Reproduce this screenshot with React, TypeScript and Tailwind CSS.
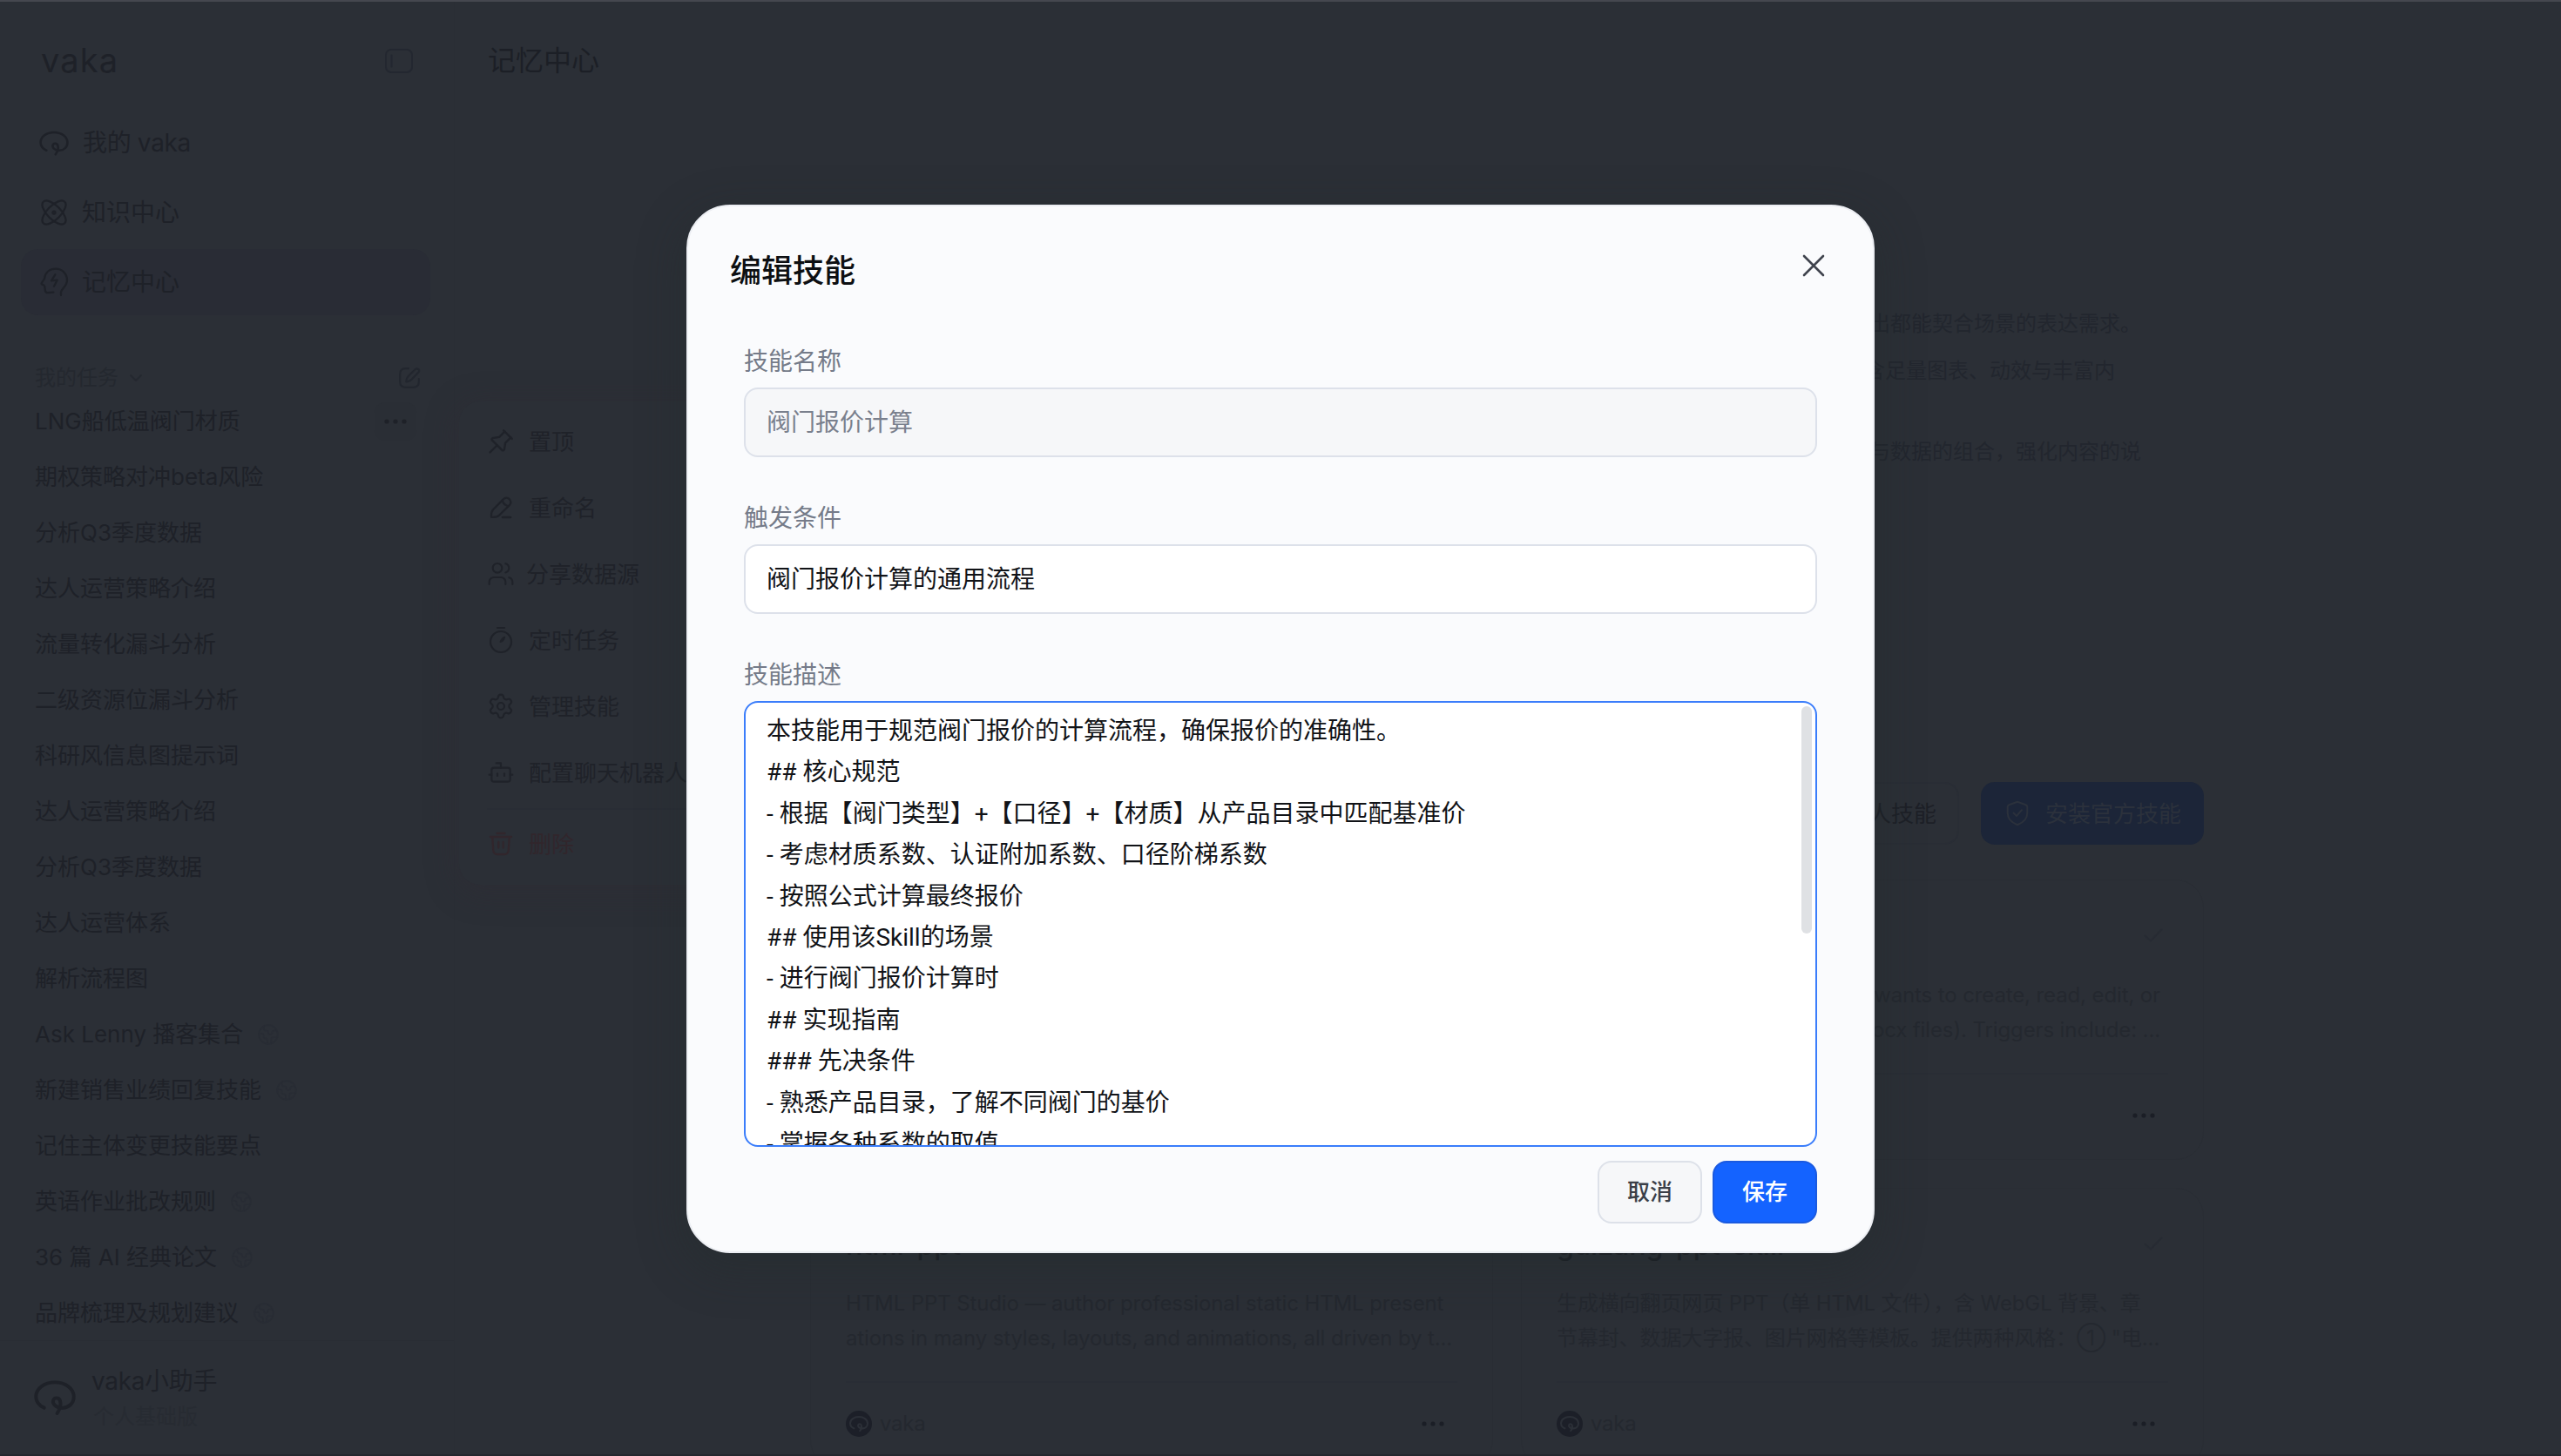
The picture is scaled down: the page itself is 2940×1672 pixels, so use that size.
import React from "react";
import { Atom, Bot, Earth, Settings, Users } from "lucide-react";

const stroke = {
  fill: "none",
  stroke: "currentColor",
  strokeLinecap: "round" as const,
  strokeLinejoin: "round" as const,
};

function Logo({ className, width = 2.6 }: { className: string; width?: number }) {
  return (
    <svg viewBox="0 0 34 29" className={className} {...stroke} strokeWidth={width}>
      <path d="M8.3 22.7C4.5 21 1.6 17.6 1.6 13.6C1.6 7 8.5 2 17 2C25.5 2 32.4 7 32.4 13.6C32.4 19 28.5 22.6 23.3 22.8C18 23 14.9 19.5 15.6 16.8C16.4 14.2 20.2 14 21.2 16.8C22.3 20 21 24.5 18.8 27.2" />
    </svg>
  );
}

function HeadIcon() {
  return (
    <svg viewBox="0 0 36 36" className="h-9 w-9" {...stroke} strokeWidth={2.3}>
      <path d="M25 33V29.5C25 26 32 23 32 15.7C32 8 26 2.7 19 2.7C12 2.7 7 7 6 14L2.8 19Q2 20.6 4.5 21Q6.3 21.5 6.3 24L7 28Q7.5 30.3 10 30.2L16.3 29.7" />
      <path d="M18.3 9.3L14 16.4L20.7 15.7L17 22.7" />
    </svg>
  );
}

function PanelIcon() {
  return (
    <svg viewBox="0 0 34 30" className="h-[30px] w-[34px]" {...stroke} strokeWidth={2}>
      <rect x="2" y="2" width="30" height="26" rx="6" />
      <path d="M8.5 8.5V21.5" />
    </svg>
  );
}

function ComposeIcon() {
  return (
    <svg viewBox="0 0 24 24" className="h-[26px] w-[26px]" {...stroke} strokeWidth={2}>
      <path d="M11 2H8Q2 2 2 8V16Q2 22 8 22H16Q22 22 22 16V13" />
      <path d="M8.5 16C8.5 12.5 9.5 11.5 11 10L18.5 2.6Q20 1.6 21.6 2.8Q23 4.4 21.6 6L14.5 13.4C13 15 11.5 16 8.5 16Z" />
    </svg>
  );
}

function PinIcon() {
  return (
    <svg viewBox="3.2 2.8 18 18" className="h-7 w-7" {...stroke} strokeWidth={1.5}>
      <path d="M15 4.5l-4 4l-5 .8q-1 .8 -.3 1.5l7.5 7.5q1 .5 1.5 -.5l.8 -5l4 -4" />
      <path d="M9 15l-4.8 4.8M14.2 3.6l6.2 6.2" />
    </svg>
  );
}

function PencilIcon() {
  return (
    <svg viewBox="0 0 28 28" className="h-7 w-7" {...stroke} strokeWidth={2.3}>
      <path d="M3 24.8C2.8 21 3.4 18 5 16.2L16.5 4.6Q20 1 23.6 4Q27.2 7.6 23.6 11.4L12 22.8C10 24.6 7 25 3 24.8Z" />
      <path d="M15.7 5.6Q17 10.5 21.8 12M15.8 25H25.3" />
    </svg>
  );
}

function StopwatchIcon() {
  return (
    <svg viewBox="0 0 28 32" className="h-8 w-7" {...stroke} strokeWidth={2.2}>
      <circle cx="14" cy="18" r="12" />
      <path d="M10 2H18" />
      <path d="M13.6 18Q14.6 14.5 18.2 12.8Q17 17.2 13.6 18Z" strokeWidth={2} />
    </svg>
  );
}

function TrashIcon() {
  return (
    <svg viewBox="0 0 28 28" className="h-7 w-7" {...stroke} strokeWidth={2.3}>
      <path d="M9.5 2H18.5M2 6H26M4.2 6L5.2 21Q5.6 26 10 26H18Q22.4 26 22.8 21L23.8 6M11.3 12V18.5M16.7 12V18.5" />
    </svg>
  );
}

function ShieldIcon() {
  return (
    <svg viewBox="0 0 26 30" className="h-[30px] w-[26px]" {...stroke} strokeWidth={2}>
      <path d="M13 1.8L22 5Q24.3 5.8 24.3 8V14.5C24.3 21 20 25.5 13 28.2C6 25.5 1.7 21 1.7 14.5V8Q1.7 5.8 4 5Z" />
      <path d="M8.5 14.5L12 18L18 11.2" />
    </svg>
  );
}

function Dots({ className }: { className: string }) {
  return (
    <svg viewBox="0 0 26 6" className={className} fill="currentColor">
      <circle cx="3" cy="3" r="2.6" />
      <circle cx="13" cy="3" r="2.6" />
      <circle cx="23" cy="3" r="2.6" />
    </svg>
  );
}

const tasks: { name: string; shared?: boolean; active?: boolean }[] = [
  { name: "LNG船低温阀门材质", active: true },
  { name: "期权策略对冲beta风险" },
  { name: "分析Q3季度数据" },
  { name: "达人运营策略介绍" },
  { name: "流量转化漏斗分析" },
  { name: "二级资源位漏斗分析" },
  { name: "科研风信息图提示词" },
  { name: "达人运营策略介绍" },
  { name: "分析Q3季度数据" },
  { name: "达人运营体系" },
  { name: "解析流程图" },
  { name: "Ask Lenny 播客集合", shared: true },
  { name: "新建销售业绩回复技能", shared: true },
  { name: "记住主体变更技能要点" },
  { name: "英语作业批改规则", shared: true },
  { name: "36 篇 AI 经典论文", shared: true },
  { name: "品牌梳理及规划建议", shared: true },
];

function Sidebar() {
  return (
    <aside className="flex h-full w-[522px] shrink-0 flex-col border-r border-[#292d35] text-[#1e2128]">
      <div className="flex h-[136px] shrink-0 items-center justify-between pr-[46px] pl-[47px]">
        <span className="-mt-[2px] font-[Inter] text-[38px] tracking-[0.03em]">vaka</span>
        <span className="text-[#232730]">
          <PanelIcon />
        </span>
      </div>
      <nav className="-mt-3 flex shrink-0 flex-col gap-1 pr-[27px] pl-6 text-[28px]">
        <div className="flex h-[76px] items-center gap-4 pl-[21px]">
          <Logo className="h-[29px] w-[34px]" />
          <span className="tracking-[-0.012em]">我的 vaka</span>
        </div>
        <div className="flex h-[76px] items-center gap-4 pl-[20px]">
          <Atom size={36} strokeWidth={1.5} />
          <span className="-ml-[2px]">知识中心</span>
        </div>
        <div className="flex h-[76px] items-center gap-[13px] rounded-[20px] bg-[#292c35] pl-[21px]">
          <HeadIcon />
          <span>记忆中心</span>
        </div>
      </nav>
      <div className="mt-12 flex h-12 shrink-0 items-center pr-[38px] pl-[40px] text-[24px] text-[#24282f]">
        <span>我的任务</span>
        <svg viewBox="0 0 14 8" className="ml-[13px] h-[8px] w-[14px]" {...stroke} strokeWidth={1.8}>
          <path d="M1 1L7 7L13 1" />
        </svg>
        <span className="ml-auto text-[#22262e]">
          <ComposeIcon />
        </span>
      </div>
      <ul className="-mt-[6px] flex h-[1087px] shrink-0 flex-col text-[26px]">
        {tasks.map((t, i) => (
          <li key={i} className="flex h-16 shrink-0 items-center pr-[43px] pl-[40px] leading-none">
            <span>{t.name}</span>
            {t.shared && <Earth size={26} strokeWidth={1.5} className="ml-[16px] text-[#282c34]" />}
            {t.active && (
              <span className="ml-auto flex h-11 w-12 items-center justify-center rounded-xl bg-[#2a2e35]">
                <Dots className="h-[6px] w-[26px]" />
              </span>
            )}
          </li>
        ))}
      </ul>
      <div className="flex h-[131px] shrink-0 items-center gap-5 border-t border-[#292d34] pl-[39px]">
        <Logo className="h-[44px] w-[48px]" width={2.8} />
        <div className="flex flex-col pt-px">
          <span className="-ml-[2px] text-[28px] leading-[42px] tracking-[-0.012em]">vaka小助手</span>
          <span className="text-[24px] leading-[40px] text-[#272b32]">个人基础版</span>
        </div>
      </div>
    </aside>
  );
}

const menuItems = [
  { icon: <PinIcon />, label: "置顶" },
  { icon: <PencilIcon />, label: "重命名" },
  { icon: <Users size={32} strokeWidth={1.6} />, label: "分享数据源", tight: true },
  { icon: <StopwatchIcon />, label: "定时任务" },
  { icon: <Settings size={32} strokeWidth={1.6} />, label: "管理技能" },
  { icon: <Bot size={32} strokeWidth={1.6} />, label: "配置聊天机器人" },
];

function ContextMenu() {
  return (
    <div className="absolute top-[461px] left-[527px] flex w-[420px] flex-col rounded-[24px] bg-[#2b2f36] pt-[8px] text-[26px] text-[#1f2229] shadow-[0_6px_32px_6px_rgba(48,42,52,0.35)]">
      {menuItems.map((m) => (
        <div key={m.label} className="flex h-[76px] items-center pl-8">
          <span className="flex w-8 justify-center">{m.icon}</span>
          <span className={m.tight ? "ml-[13px]" : "ml-[16px]"}>{m.label}</span>
        </div>
      ))}
      <div className="mx-8 mt-[3px] h-[2px] bg-[#292d35]" />
      <div className="flex h-[86px] items-center pb-2 pl-8 text-[#31262c]">
        <span className="flex w-8 justify-center">
          <TrashIcon />
        </span>
        <span className="ml-[16px]">删除</span>
      </div>
    </div>
  );
}

function SkillCard({
  title,
  lines,
  alignEnd,
  className,
}: {
  title: string;
  lines: string[];
  alignEnd?: boolean;
  className: string;
}) {
  return (
    <article className={`flex h-[322px] flex-col rounded-[32px] border border-[#292d34] px-10 pt-[39px] ${className}`}>
      <div className="flex h-12 items-center justify-between">
        <h3 className="pt-1 text-[32px] font-medium text-[#1b1e25]">{title}</h3>
        <svg viewBox="0 0 22 16" className="mr-[6px] h-4 w-[22px] text-[#272b33]" {...stroke} strokeWidth={2}>
          <path d="M1.5 8.5L8 14.5L20.5 1.5" />
        </svg>
      </div>
      <div
        className={`mt-[25px] flex flex-col text-[24px] leading-[40px] tracking-[-0.005em] whitespace-nowrap text-[#24282f] ${
          alignEnd ? "items-end pr-[9px]" : ""
        }`}
      >
        {lines.map((l) => (
          <p key={l}>{l}</p>
        ))}
      </div>
      <div className="mt-[29px] h-[2px] bg-[#292d35]" />
      <div className="mt-8 flex h-[30px] items-center">
        <span className="flex h-[30px] w-[30px] items-center justify-center rounded-full bg-[#1c1f28] text-[#2b2f37]">
          <Logo className="h-[20px] w-[22px]" width={3.2} />
        </span>
        <span className="ml-[9px] text-[24px] tracking-[-0.012em] text-[#24282f]">vaka</span>
        <Dots className="mr-[15px] ml-auto h-[6px] w-[26px] text-[#1b1e26]" />
      </div>
    </article>
  );
}

function MainPane() {
  return (
    <main className="flex min-w-0 flex-1 flex-col">
      <header className="flex h-[136px] shrink-0 items-center pl-[38px] text-[32px] text-[#1c1f26]">记忆中心</header>
      <section className="mt-[214px] flex h-[546px] shrink-0 flex-col pl-[1624px] text-[24px] leading-[40px] text-[#22262e]">
        <p>出都能契合场景的表达需求。</p>
        <p className="mt-[14px] -ml-[6px]">含足量图表、动效与丰富内</p>
        <p className="mt-[53px]">与数据的组合，强化内容的说</p>
      </section>
      <div className="flex h-[72px] shrink-0 justify-end gap-[25px] pr-[410px] text-[26px]">
        <div className="flex w-[240px] items-center justify-end rounded-2xl border-2 border-[#292d35] pr-6 text-[#1d2027]">
          安装个人技能
        </div>
        <div className="flex w-[256px] items-center rounded-2xl bg-[#1c2538] pl-[29px] text-[#2b313c]">
          <ShieldIcon />
          <span className="ml-[19px]">安装官方技能</span>
        </div>
      </div>
      <div className="mt-10 ml-[408px] grid w-[1600px] shrink-0 grid-cols-2 gap-8">
        <SkillCard
          className="col-start-2"
          title="docx"
          alignEnd
          lines={["wants to create, read, edit, or", "ocx files). Triggers include: ..."]}
        />
        <SkillCard
          className="col-start-1"
          title="html-ppt"
          lines={[
            "HTML PPT Studio — author professional static HTML present",
            "ations in many styles, layouts, and animations, all driven by t...",
          ]}
        />
        <SkillCard
          className=""
          title="guizang-ppt-skill"
          lines={[
            "生成横向翻页网页 PPT（单 HTML 文件），含 WebGL 背景、章",
            '节幕封、数据大字报、图片网格等模板。提供两种风格：① "电...',
          ]}
        />
      </div>
    </main>
  );
}

const description = [
  "本技能用于规范阀门报价的计算流程，确保报价的准确性。",
  "## 核心规范",
  "- 根据【阀门类型】+【口径】+【材质】从产品目录中匹配基准价",
  "- 考虑材质系数、认证附加系数、口径阶梯系数",
  "- 按照公式计算最终报价",
  "## 使用该Skill的场景",
  "- 进行阀门报价计算时",
  "## 实现指南",
  "### 先决条件",
  "- 熟悉产品目录，了解不同阀门的基价",
  "- 掌握各种系数的取值",
];

function EditSkillDialog() {
  return (
    <div className="absolute inset-0 flex justify-center pt-[235px]">
      <div className="flex h-[1204px] w-[1364px] flex-col rounded-[50px] border-2 border-[#eceef3] bg-[#fafbfd] px-[64px] font-[Roboto,'Noto_Sans_CJK_SC',sans-serif] text-[28px] shadow-[0_16px_48px_8px_rgba(34,42,44,0.35)]">
        <div className="-mr-[9px] -ml-4 flex h-[146px] shrink-0 items-center justify-between">
          <h2 className="pt-[3px] text-[36px] font-medium text-[#0d0f12]">编辑技能</h2>
          <svg viewBox="0 0 26 26" className="-mt-[10px] h-[26px] w-[26px] text-[#3f434d]" {...stroke} strokeWidth={2.6}>
            <path d="M2 2L24 24M24 2L2 24" />
          </svg>
        </div>
        <label className="mt-[13px] h-10 leading-10 text-[#757b89]">技能名称</label>
        <div className="mt-[9px] flex h-20 items-center rounded-2xl border-2 border-[#dde1ea] bg-[#f6f7f9] pt-[2px] pl-[24px] text-[#7a808d]">
          阀门报价计算
        </div>
        <label className="mt-[51px] h-10 leading-10 text-[#757b89]">触发条件</label>
        <div className="mt-[9px] flex h-20 items-center rounded-2xl border-2 border-[#dde1ea] bg-white pt-px pl-[24px] text-[#111317]">
          阀门报价计算的通用流程
        </div>
        <label className="mt-[51px] h-10 leading-10 text-[#757b89]">技能描述</label>
        <div className="mt-[9px] flex h-[512px] shrink-0 justify-between overflow-hidden rounded-2xl border-2 border-[#3a7dfb] bg-white pt-[4px] pr-1 pl-[24px]">
          <div className="mt-[5px] flex flex-col text-[#111317]">
            {description.map((line) => (
              <p key={line} className="h-[47.4px] shrink-0 leading-[47.4px] whitespace-nowrap">
                {line}
              </p>
            ))}
          </div>
          <div className="h-[261px] w-3 rounded-full bg-[#dfe1e4]" />
        </div>
        <div className="mt-4 flex justify-end gap-3 text-[26px] font-medium">
          <button className="h-[72px] w-[120px] rounded-2xl border-2 border-[#dde1e9] bg-[#f6f7f9] pt-px text-[#3b3f48]">
            取消
          </button>
          <button className="h-[72px] w-[120px] rounded-2xl border-2 border-[#1a5ae0] bg-[#1463ff] pt-px text-white">
            保存
          </button>
        </div>
      </div>
    </div>
  );
}

export default function App() {
  return (
    <div className="relative flex h-[1672px] w-[2940px] flex-col overflow-hidden border-t-2 border-b-2 border-t-[#45474f] border-b-[#24272e] bg-[#2b2f36] font-[Inter,'Noto_Sans_CJK_SC',sans-serif]">
      <div className="flex min-h-0 flex-1">
        <Sidebar />
        <MainPane />
      </div>
      <div className="absolute inset-0 -top-[2px]">
        <ContextMenu />
        <EditSkillDialog />
      </div>
    </div>
  );
}
